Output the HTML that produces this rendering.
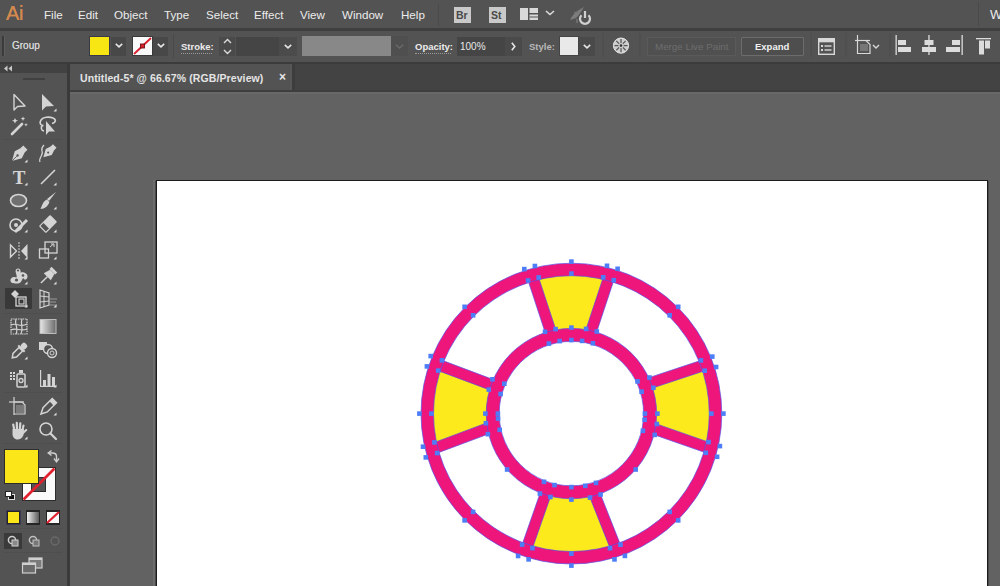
<!DOCTYPE html>
<html><head><meta charset="utf-8">
<style>
*{margin:0;padding:0;box-sizing:border-box}
html,body{width:1000px;height:586px;overflow:hidden;background:#535353;font-family:"Liberation Sans",sans-serif;color:#dcdcdc}
.a{position:absolute}
.menu span{position:absolute;top:8px;font-size:11.6px;color:#ececec;line-height:14px;white-space:nowrap}
.ctl{font-size:10px;line-height:12px;white-space:nowrap}
svg{position:absolute;overflow:visible}
</style></head><body>
<!-- MENU BAR -->
<div class="a" style="left:0;top:0;width:1000px;height:28px;background:#535353"></div>
<div class="a" style="left:0;top:28px;width:1000px;height:3px;background:#3f3f3f"></div>
<div class="menu">
<span style="left:6px;top:2px;font-size:20px;line-height:22px;color:#d48a4e;letter-spacing:-0.3px;text-shadow:0 0 0.5px #d48a4e">Ai</span>
<span style="left:44px">File</span>
<span style="left:78px">Edit</span>
<span style="left:114px">Object</span>
<span style="left:164px">Type</span>
<span style="left:206px">Select</span>
<span style="left:254px">Effect</span>
<span style="left:300px">View</span>
<span style="left:342px">Window</span>
<span style="left:401px">Help</span>
<span style="left:990px;font-size:13px">W</span>
</div>


<!-- MENU ICONS -->
<div class="a" style="left:438px;top:4px;width:1px;height:22px;background:#4a4a4a"></div>
<div class="a" style="left:454px;top:7px;width:17px;height:16px;background:#c9c9c9"></div>
<span class="a" style="left:456px;top:9px;font-size:10.5px;line-height:12px;color:#4a4a4a;font-weight:bold">Br</span>
<div class="a" style="left:489px;top:7px;width:17px;height:16px;background:#c9c9c9"></div>
<span class="a" style="left:491px;top:9px;font-size:10.5px;line-height:12px;color:#4a4a4a;font-weight:bold">St</span>
<svg style="left:520px;top:8px" width="18" height="12"><g fill="#d9d9d9"><rect x="0" y="0" width="8" height="12"/><rect x="9.5" y="0" width="8.5" height="5"/><rect x="9.5" y="6.5" width="8.5" height="5.5"/></g><rect x="9.5" y="8.5" width="8.5" height="1" fill="#535353"/></svg>
<svg style="left:545px;top:10px" width="10" height="6"><polyline points="1,1 5,4.5 9,1" stroke="#dcdcdc" stroke-width="1.6" fill="none"/></svg>
<svg style="left:568px;top:4px" width="26" height="22"><path d="M2 16 C5 10 10 6 16 3 C13 8 11 11 8 14 Z" fill="#7d7d7d"/><path d="M6 9 L10 8 M9 15 L9 19" stroke="#777" stroke-width="1.5"/><path d="M13.5 11.3 A5 5 0 1 0 20.5 11.3" fill="none" stroke="#d0d0d0" stroke-width="2.2"/><line x1="17" y1="7" x2="17" y2="14" stroke="#d0d0d0" stroke-width="2.2"/></svg>
<div class="a" style="left:978px;top:2px;width:1px;height:24px;background:#4a4a4a"></div>

<!-- CONTROL BAR -->
<div class="a" style="left:0;top:31px;width:1000px;height:31px;background:#535353"></div>
<div class="a" style="left:0;top:62px;width:1000px;height:2px;background:#3c3c3c"></div>


<!-- CONTROL CONTENT -->
<div class="a" style="left:2px;top:36px;width:2px;height:20px;background:#3b3b3b"></div>
<div class="a" style="left:4px;top:36px;width:1px;height:20px;background:#5e5e5e"></div>
<span class="a ctl" style="left:12px;top:40px;color:#d4d4d4;text-shadow:0 0 0.4px #d4d4d4">Group</span>
<div class="a" style="left:89px;top:36px;width:21px;height:20px;background:#3a3a46"></div>
<div class="a" style="left:90px;top:37px;width:19px;height:18px;background:#f7e514"></div>
<div class="a" style="left:111px;top:37px;width:15px;height:19px;background:#484848"></div>
<svg style="left:115px;top:43px" width="8" height="5"><polyline points="0.8,0.8 4,3.8 7.2,0.8" stroke="#e6e6e6" stroke-width="1.6" fill="none"/></svg>
<div class="a" style="left:132px;top:36px;width:21px;height:20px;background:#3a3a3a"></div>
<div class="a" style="left:133px;top:37px;width:19px;height:18px;background:#fafafa"></div>
<svg style="left:133px;top:37px" width="19" height="18"><line x1="1" y1="17" x2="18" y2="1" stroke="#d9202f" stroke-width="1.8"/><rect x="7.5" y="7" width="4" height="4" fill="#d9202f" stroke="#6a1515" stroke-width="0.9"/></svg>
<div class="a" style="left:153px;top:37px;width:15px;height:19px;background:#484848"></div>
<svg style="left:157px;top:43px" width="8" height="5"><polyline points="0.8,0.8 4,3.8 7.2,0.8" stroke="#e6e6e6" stroke-width="1.6" fill="none"/></svg>
<div class="a" style="left:173px;top:34px;width:1px;height:24px;background:#4a4a4a"></div>

<span class="a ctl" style="left:181px;top:41px;color:#ececec;font-weight:bold;font-size:9.5px">Stroke:</span>
<div class="a" style="left:181px;top:53px;width:31px;height:0;border-top:1px dotted #9a9a9a"></div>
<div class="a" style="left:219px;top:37px;width:16px;height:19px;background:#4a4a4a"></div>
<svg style="left:223px;top:38px" width="9" height="17"><polyline points="1,5 4.5,1.5 8,5" stroke="#dadada" stroke-width="1.4" fill="none"/><polyline points="1,12 4.5,15.5 8,12" stroke="#dadada" stroke-width="1.4" fill="none"/></svg>
<div class="a" style="left:236px;top:37px;width:43px;height:19px;background:#454545"></div>
<div class="a" style="left:279px;top:37px;width:18px;height:19px;background:#4b4b4b"></div>
<svg style="left:284px;top:44px" width="8" height="5"><polyline points="0.8,0.8 4,3.8 7.2,0.8" stroke="#e6e6e6" stroke-width="1.6" fill="none"/></svg>
<div class="a" style="left:302px;top:36px;width:89px;height:20px;background:#888888"></div>
<div class="a" style="left:391px;top:36px;width:17px;height:20px;background:#4f4f4f"></div>
<svg style="left:395px;top:44px" width="9" height="5"><polyline points="0.8,0.8 4.5,4 8.2,0.8" stroke="#6a6a6a" stroke-width="1.4" fill="none"/></svg>

<span class="a ctl" style="left:415px;top:41px;color:#ececec;font-weight:bold;font-size:9.5px">Opacity:</span>
<div class="a" style="left:415px;top:53px;width:36px;height:0;border-top:1px dotted #9a9a9a"></div>
<div class="a" style="left:457px;top:37px;width:48px;height:19px;background:#454545"></div>
<span class="a ctl" style="left:460px;top:41px;color:#e8e8e8;font-size:10px">100%</span>
<div class="a" style="left:505px;top:37px;width:17px;height:19px;background:#4a4a4a"></div>
<svg style="left:511px;top:42px" width="5" height="9"><polyline points="0.8,0.8 3.8,4.5 0.8,8.2" stroke="#e6e6e6" stroke-width="1.6" fill="none"/></svg>
<span class="a ctl" style="left:529px;top:41px;color:#b8b8b8;font-weight:bold;font-size:9.5px">Style:</span>
<div class="a" style="left:559px;top:36px;width:20px;height:20px;background:#444"></div>
<div class="a" style="left:560px;top:37px;width:18px;height:18px;background:#e9e9e9"></div>
<div class="a" style="left:579px;top:37px;width:16px;height:19px;background:#4a4a4a"></div>
<svg style="left:583px;top:44px" width="8" height="5"><polyline points="0.8,0.8 4,3.8 7.2,0.8" stroke="#e6e6e6" stroke-width="1.6" fill="none"/></svg>
<div class="a" style="left:602px;top:33px;width:2px;height:24px;background:#4f4f4f"></div>
<svg style="left:612px;top:37px" width="18" height="18"><circle cx="9" cy="8.6" r="7.6" fill="#cfcfcf" stroke="#e4e4e4" stroke-width="1"/><g stroke="#5a5a5a" stroke-width="1.3"><line x1="9" y1="2" x2="9" y2="15.2"/><line x1="2.4" y1="8.6" x2="15.6" y2="8.6"/><line x1="4.3" y1="3.9" x2="13.7" y2="13.3"/><line x1="13.7" y1="3.9" x2="4.3" y2="13.3"/></g><circle cx="9" cy="8.6" r="2.6" fill="#cfcfcf"/><circle cx="9" cy="8.6" r="1.3" fill="#333"/></svg>
<div class="a" style="left:639px;top:33px;width:2px;height:24px;background:#4f4f4f"></div>
<div class="a" style="left:647px;top:37px;width:89px;height:19px;border:1px solid #5a5a5a;background:#505050"></div>
<span class="a ctl" style="left:655px;top:41px;color:#6e6e6e;font-size:9.8px">Merge Live Paint</span>
<div class="a" style="left:741px;top:37px;width:63px;height:19px;border:1px solid #6c6c6c;background:#4e4e4e;border-radius:1px"></div>
<span class="a ctl" style="left:755px;top:41px;color:#f0f0f0;font-weight:bold;font-size:9.5px">Expand</span>
<div class="a" style="left:810px;top:33px;width:2px;height:24px;background:#4f4f4f"></div>
<svg style="left:818px;top:38px" width="17" height="17"><rect x="0.7" y="0.7" width="15.6" height="15.6" fill="none" stroke="#d8d8d8" stroke-width="1.4"/><rect x="1" y="1" width="15" height="3.3" fill="#d8d8d8"/><g fill="#d8d8d8"><rect x="3" y="7" width="2" height="2"/><rect x="3" y="11" width="2" height="2"/><rect x="6.5" y="7.3" width="7" height="1.4"/><rect x="6.5" y="11.3" width="7" height="1.4"/></g></svg>
<div class="a" style="left:845px;top:33px;width:2px;height:24px;background:#4f4f4f"></div>
<svg style="left:854px;top:34px" width="28" height="21"><g stroke="#d8d8d8" stroke-width="1.2" fill="none"><line x1="3.5" y1="1" x2="3.5" y2="20"/><line x1="1" y1="6.5" x2="16" y2="6.5"/><path d="M3.5 6.5 H12 L16 10.5 V19.5 H3.5"/></g><rect x="6" y="10" width="8" height="7" fill="#777"/><polyline points="19,11 22,14 25,11" stroke="#d8d8d8" stroke-width="1.4" fill="none"/></svg>
<div class="a" style="left:889px;top:33px;width:2px;height:24px;background:#4f4f4f"></div>
<svg style="left:894px;top:34px" width="104" height="22"><g fill="#dcdcdc">
<rect x="1.5" y="1" width="1.3" height="20"/><rect x="4" y="6" width="8" height="5"/><rect x="4" y="13" width="13" height="5"/>
<rect x="34.3" y="1" width="1.3" height="20"/><rect x="30.5" y="6" width="9" height="5"/><rect x="28" y="13" width="14" height="5"/>
<rect x="67.5" y="1" width="1.3" height="20"/><rect x="58" y="6" width="8" height="5"/><rect x="52" y="13" width="14" height="5"/>
<rect x="82" y="4" width="15" height="1.3"/><rect x="85" y="6.5" width="5" height="14"/><rect x="91" y="6.5" width="5" height="8"/>
</g></svg>

<!-- TAB BAR / PANEL HEADER -->
<div class="a" style="left:0;top:73px;width:67px;height:513px;background:#535353"></div>
<div class="a" style="left:67px;top:64px;width:3px;height:522px;background:#3a3a3a"></div>
<div class="a" style="left:70px;top:64px;width:930px;height:26px;background:#434343"></div>
<div class="a" style="left:70px;top:64px;width:220px;height:26px;background:#535353"></div>
<div class="a" style="left:290px;top:64px;width:2px;height:26px;background:#575757"></div>
<div class="a" style="left:292px;top:64px;width:3px;height:26px;background:#3d3d3d"></div>
<div class="a" style="left:70px;top:90px;width:930px;height:2px;background:#3e3e3e"></div>
<div class="a" style="left:70px;top:92px;width:930px;height:2px;background:#686868"></div>
<span class="a" style="left:80px;top:72px;font-size:10.5px;line-height:13px;color:#e4e4e4;white-space:nowrap;font-weight:bold;letter-spacing:0.1px">Untitled-5* @ 66.67% (RGB/Preview)</span>
<span class="a" style="left:279px;top:71px;font-size:12px;line-height:13px;color:#e6e6e6;font-weight:bold">×</span>


<div class="a" style="left:0;top:64px;width:67px;height:9px;background:#424242"></div>
<svg style="left:3px;top:65px" width="10" height="7"><path d="M4.5 0.5 L1 3.5 L4.5 6.5 Z M9 0.5 L5.5 3.5 L9 6.5 Z" fill="#c8c8c8"/></svg>
<div class="a" style="left:23px;top:78px;width:22px;height:2px;background:#404040"></div>
<div class="a" style="left:4px;top:139px;width:58px;height:1px;background:#4e4e4e"></div>
<div class="a" style="left:4px;top:313px;width:58px;height:1px;background:#4e4e4e"></div>
<div class="a" style="left:4px;top:392px;width:58px;height:1px;background:#4e4e4e"></div>
<div class="a" style="left:4px;top:443px;width:58px;height:1px;background:#4e4e4e"></div>
<!-- fill/stroke -->
<div class="a" style="left:22px;top:467px;width:34px;height:34px;background:#fafafa;border:1px solid #2c2c2c"></div>
<div class="a" style="left:31px;top:477px;width:15px;height:15px;background:#535353;border:1px solid #2c2c2c"></div>
<svg style="left:22px;top:467px" width="34" height="34"><line x1="1.5" y1="32.5" x2="32.5" y2="1.5" stroke="#e0202e" stroke-width="2.6"/></svg>
<div class="a" style="left:4px;top:449px;width:35px;height:35px;background:#2d2d2d"></div>
<div class="a" style="left:5px;top:450px;width:33px;height:33px;background:#fbe719"></div>
<svg style="left:47px;top:450px" width="12" height="13"><path d="M9.5 11 V6.5 C9.5 4 8 3 5.5 3 H2" fill="none" stroke="#cfcfcf" stroke-width="1.4"/><path d="M4.5 0.5 L1.2 3 L4.5 5.5 M7 8.5 L9.5 11.8 L12 8.5" fill="none" stroke="#cfcfcf" stroke-width="1.4"/></svg>
<div class="a" style="left:8px;top:494px;width:7px;height:6px;background:#111;border:1px solid #ddd"></div>
<div class="a" style="left:5px;top:491px;width:7px;height:6px;background:#fff;border:1px solid #222"></div>
<!-- small swatches -->
<div class="a" style="left:6px;top:510px;width:15px;height:15px;background:#252525;border:1px solid #3a3a55"></div>
<div class="a" style="left:8px;top:512px;width:11px;height:11px;background:#fbe719"></div>
<div class="a" style="left:26px;top:510px;width:14px;height:15px;background:#252525"></div>
<div class="a" style="left:27px;top:512px;width:12px;height:11px;background:linear-gradient(90deg,#f2f2f2,#5a5a5a)"></div>
<div class="a" style="left:46px;top:510px;width:14px;height:15px;background:#252525"></div>
<div class="a" style="left:47px;top:512px;width:12px;height:11px;background:#fafafa"></div>
<svg style="left:47px;top:512px" width="12" height="11"><line x1="0" y1="11" x2="12" y2="0" stroke="#e0202e" stroke-width="2.2"/></svg>
<!-- draw modes -->
<div class="a" style="left:4px;top:533px;width:18px;height:16px;background:#3a3a3a"></div>
<svg style="left:7px;top:535px" width="12" height="12"><circle cx="5" cy="5" r="3.6" fill="none" stroke="#cfcfcf" stroke-width="1.5"/><rect x="5" y="5" width="6" height="6" fill="#888" stroke="#cfcfcf"/></svg>
<svg style="left:28px;top:535px" width="12" height="12"><circle cx="5" cy="5" r="3.6" fill="none" stroke="#c0c0c0" stroke-width="1.5"/><rect x="5" y="5" width="6" height="6" fill="#777" stroke="#c0c0c0"/></svg>
<svg style="left:49px;top:535px" width="12" height="12"><circle cx="6" cy="6" r="4" fill="none" stroke="#6a6a6a" stroke-width="1.4"/></svg>
<div class="a" style="left:4px;top:528px;width:58px;height:1px;background:#4e4e4e"></div>
<div class="a" style="left:4px;top:552px;width:58px;height:1px;background:#4e4e4e"></div>
<!-- screen mode -->
<svg style="left:21px;top:557px" width="24" height="18"><rect x="8" y="1" width="13" height="10" fill="#7a7a7a" stroke="#cfcfcf" stroke-width="1.2"/><rect x="1.5" y="6" width="13" height="10" fill="#6a6a6a" stroke="#cfcfcf" stroke-width="1.2"/><rect x="1.5" y="6" width="13" height="2" fill="#cfcfcf"/><rect x="8" y="1" width="13" height="2" fill="#cfcfcf"/></svg>
<svg style="left:8.0px;top:91.5px" width="22" height="22" viewBox="0 0 22 22"><path d="M6 2.5 L6 18 L9.5 14.5 L17 14 Z" fill="none" stroke="#d4d4d4" stroke-width="1.4" stroke-linejoin="round"/></svg>
<svg style="left:37.0px;top:91.5px" width="22" height="22" viewBox="0 0 22 22"><path d="M5 2 L5 18.5 L9 14.5 L17 14 Z" fill="#d4d4d4"/><path d="M19.5 16.5 L19.5 19.5 L16.5 19.5 Z" fill="#e0e0e0"/></svg>
<svg style="left:8.0px;top:115.0px" width="22" height="22" viewBox="0 0 22 22"><line x1="4" y1="19" x2="14" y2="9" stroke="#d4d4d4" stroke-width="2.6" stroke-linecap="round"/><path d="M7 3 l1 2 l2 .6 l-2 .8 l-1 2 l-1-2 l-2-.8 l2-.6z M15 1.5 l.7 1.6 l1.6.6 l-1.6.6 l-.7 1.6 l-.7-1.6 l-1.6-.6 l1.6-.6z M18 8 l.6 1.3 l1.3.5 l-1.3.5 l-.6 1.3 l-.6-1.3 l-1.3-.5 l1.3-.5z" fill="#d4d4d4"/></svg>
<svg style="left:37.0px;top:115.0px" width="22" height="22" viewBox="0 0 22 22"><path d="M15 8.5 C19 7.5 19.5 4.5 16 3 C12 1.5 6 2 4 5 C2 8 3.5 10.5 6.5 10.5 M5.5 10.5 C3.5 12 4 15.5 7 16" fill="none" stroke="#d4d4d4" stroke-width="1.6"/><path d="M9 6 L9 20 L12 16.5 L18 16.5 Z" fill="#d4d4d4"/></svg>
<svg style="left:8.0px;top:143.0px" width="22" height="22" viewBox="0 0 22 22"><g transform="rotate(45 11 11)"><path d="M8 2 H14 V6 L16 12 L11 21 L6 12 L8 6 Z" fill="#d4d4d4"/><circle cx="11" cy="13" r="1.2" fill="#535353"/><line x1="11" y1="14" x2="11" y2="21" stroke="#535353" stroke-width="0.8"/></g><path d="M19.5 16.5 L19.5 19.5 L16.5 19.5 Z" fill="#e0e0e0"/></svg>
<svg style="left:37.0px;top:143.0px" width="22" height="22" viewBox="0 0 22 22"><g transform="translate(3,-1) scale(0.85)"><g transform="rotate(45 11 11)"><path d="M8 2 H14 V6 L16 12 L11 21 L6 12 L8 6 Z" fill="#d4d4d4"/><circle cx="11" cy="13" r="1.2" fill="#535353"/></g></g><path d="M3 19 C1 15 7 12 5 8 C4 5 6 3 7 2" fill="none" stroke="#d4d4d4" stroke-width="1.2"/></svg>
<svg style="left:8.0px;top:166.0px" width="22" height="22" viewBox="0 0 22 22"><text x="11" y="18" text-anchor="middle" font-family="Liberation Serif" font-weight="bold" font-size="19" fill="#d4d4d4">T</text><path d="M19.5 16.5 L19.5 19.5 L16.5 19.5 Z" fill="#e0e0e0"/></svg>
<svg style="left:37.0px;top:166.0px" width="22" height="22" viewBox="0 0 22 22"><line x1="4" y1="18" x2="18" y2="4" stroke="#d4d4d4" stroke-width="1.6"/><path d="M19.5 16.5 L19.5 19.5 L16.5 19.5 Z" fill="#e0e0e0"/></svg>
<svg style="left:8.0px;top:189.5px" width="22" height="22" viewBox="0 0 22 22"><ellipse cx="10.5" cy="10.5" rx="8" ry="6" fill="#6f6f6f" stroke="#d4d4d4" stroke-width="1.6"/><path d="M19.5 16.5 L19.5 19.5 L16.5 19.5 Z" fill="#e0e0e0"/></svg>
<svg style="left:37.0px;top:189.5px" width="22" height="22" viewBox="0 0 22 22"><path d="M19 2 L12 11 L10 9 Z" fill="#d4d4d4"/><path d="M10 9.5 L12.5 12 C11 16 8 19 3.5 19 C5 16 6 11 10 9.5 Z" fill="#d4d4d4"/><path d="M19.5 16.5 L19.5 19.5 L16.5 19.5 Z" fill="#e0e0e0"/></svg>
<svg style="left:8.0px;top:213.0px" width="22" height="22" viewBox="0 0 22 22"><circle cx="8" cy="12" r="6" fill="none" stroke="#d4d4d4" stroke-width="1.6"/><circle cx="8" cy="12" r="2" fill="#d4d4d4"/><line x1="7" y1="19" x2="19" y2="7" stroke="#d4d4d4" stroke-width="3"/><path d="M19.5 16.5 L19.5 19.5 L16.5 19.5 Z" fill="#e0e0e0"/></svg>
<svg style="left:37.0px;top:213.0px" width="22" height="22" viewBox="0 0 22 22"><g transform="rotate(45 11 11)"><rect x="6" y="3" width="10" height="16" rx="1" fill="#d4d4d4"/><rect x="7.2" y="13.5" width="7.6" height="4.3" fill="#535353"/></g><path d="M19.5 16.5 L19.5 19.5 L16.5 19.5 Z" fill="#e0e0e0"/></svg>
<svg style="left:8.0px;top:240.0px" width="22" height="22" viewBox="0 0 22 22"><path d="M2.5 5 L8.5 11 L2.5 17 Z" fill="none" stroke="#d4d4d4" stroke-width="1.4"/><line x1="11" y1="2" x2="11" y2="20" stroke="#d4d4d4" stroke-width="1" stroke-dasharray="2 1"/><path d="M19.5 4 L13 11 L19.5 18 Z" fill="#d4d4d4"/><path d="M19.5 16.5 L19.5 19.5 L16.5 19.5 Z" fill="#e0e0e0"/></svg>
<svg style="left:37.0px;top:240.0px" width="22" height="22" viewBox="0 0 22 22"><rect x="8" y="2" width="12" height="11" fill="none" stroke="#d4d4d4" stroke-width="1.3"/><rect x="2.5" y="9" width="9" height="9" fill="none" stroke="#d4d4d4" stroke-width="1.3"/><path d="M13 7 L16.5 4 M14 4 H17 V7" stroke="#d4d4d4" stroke-width="1" fill="none"/><path d="M19.5 16.5 L19.5 19.5 L16.5 19.5 Z" fill="#e0e0e0"/></svg>
<svg style="left:8.0px;top:264.5px" width="22" height="22" viewBox="0 0 22 22"><path d="M2.5 16 C2 12.5 6 11 8.5 12.5 C9.5 10 6.5 7 8 4.5 C10 2 13.5 4 12.5 7.5 C15 6.5 20 8 19.5 12 C19 15 16 15.5 15.5 13 C13.5 14 14 18.5 9.5 18.5 C6.5 18.5 3 18.5 2.5 16 Z" fill="#d4d4d4"/><circle cx="8.5" cy="15" r="1.6" fill="#535353"/><circle cx="15" cy="10.5" r="1.3" fill="#535353"/><circle cx="10" cy="5.5" r="1.1" fill="#535353"/><path d="M19.5 16.5 L19.5 19.5 L16.5 19.5 Z" fill="#e0e0e0"/></svg>
<svg style="left:37.0px;top:264.5px" width="22" height="22" viewBox="0 0 22 22"><g transform="rotate(45 11 11)"><rect x="7" y="2" width="8" height="3" fill="#d4d4d4"/><path d="M8 5 H14 L16 12 H6 Z" fill="#d4d4d4"/><line x1="11" y1="12" x2="11" y2="21" stroke="#d4d4d4" stroke-width="1.5"/></g><path d="M19.5 16.5 L19.5 19.5 L16.5 19.5 Z" fill="#e0e0e0"/></svg>
<div class="a" style="left:5px;top:288px;width:27px;height:21px;background:#393939;border-radius:1px"></div>
<svg style="left:8.0px;top:287.5px" width="22" height="22" viewBox="0 0 22 22"><rect x="8" y="9" width="10" height="9" fill="none" stroke="#d4d4d4" stroke-width="1.3"/><rect x="11" y="11" width="5" height="5" fill="none" stroke="#d4d4d4" stroke-width="1.1"/><path d="M3 6 L7 2 L11 6 L7 10 Z" fill="#d4d4d4"/><path d="M19.5 16.5 L19.5 19.5 L16.5 19.5 Z" fill="#e0e0e0"/></svg>
<svg style="left:37.0px;top:287.5px" width="22" height="22" viewBox="0 0 22 22"><path d="M3 2 L12 5 V17 L3 20 Z" fill="none" stroke="#d4d4d4" stroke-width="1.2"/><line x1="3" y1="8" x2="12" y2="9" stroke="#d4d4d4"/><line x1="3" y1="14" x2="12" y2="13" stroke="#d4d4d4"/><line x1="7" y1="3" x2="7" y2="19" stroke="#d4d4d4"/><path d="M12 11 L20 11 M12 14 L19 14 M12 17 L20 17" stroke="#9a9a9a"/><path d="M19.5 16.5 L19.5 19.5 L16.5 19.5 Z" fill="#e0e0e0"/></svg>
<svg style="left:8.0px;top:316.0px" width="22" height="22" viewBox="0 0 22 22"><rect x="3" y="3" width="16" height="15" fill="none" stroke="#d4d4d4" stroke-width="1.2" stroke-dasharray="1.5 .8"/><path d="M3 9 C8 6 12 12 19 8 M3 14 C8 11 12 16 19 13 M8 3 C6 8 11 12 8 18 M14 3 C12 8 16 12 13 18" fill="none" stroke="#d4d4d4" stroke-width="1.2"/></svg>
<svg style="left:37.0px;top:316.0px" width="22" height="22" viewBox="0 0 22 22"><defs><linearGradient id="gg" x1="0" x2="1"><stop offset="0" stop-color="#e8e8e8"/><stop offset="1" stop-color="#6a6a6a"/></linearGradient></defs><rect x="3" y="3.5" width="16" height="14" fill="url(#gg)" stroke="#bdbdbd" stroke-width="1"/></svg>
<svg style="left:8.0px;top:340.0px" width="22" height="22" viewBox="0 0 22 22"><g transform="rotate(45 11 11)"><rect x="8" y="1" width="6" height="6" rx="2" fill="#d4d4d4"/><rect x="6.5" y="6.5" width="9" height="2" fill="#d4d4d4"/><path d="M8.5 8.5 H13.5 V17 L11 20.5 L8.5 17 Z" fill="none" stroke="#d4d4d4" stroke-width="1.5"/></g><path d="M19.5 16.5 L19.5 19.5 L16.5 19.5 Z" fill="#e0e0e0"/></svg>
<svg style="left:37.0px;top:340.0px" width="22" height="22" viewBox="0 0 22 22"><rect x="2" y="2" width="8" height="8" fill="#d4d4d4"/><circle cx="11" cy="9" r="4.5" fill="#535353" stroke="#d4d4d4" stroke-width="1.4"/><circle cx="15" cy="13" r="4.5" fill="#535353" stroke="#d4d4d4" stroke-width="1.4"/><circle cx="15" cy="13" r="2" fill="#535353" stroke="#d4d4d4"/></svg>
<svg style="left:8.0px;top:368.0px" width="22" height="22" viewBox="0 0 22 22"><g fill="#d4d4d4"><rect x="2" y="4" width="2" height="2"/><rect x="5" y="4" width="2" height="2"/><rect x="2" y="7" width="2" height="2"/><rect x="5" y="7" width="2" height="2"/><rect x="2" y="10" width="2" height="2"/><rect x="5" y="10" width="2" height="2"/><rect x="11" y="2" width="4" height="3"/></g><rect x="9" y="6" width="8" height="13" rx="1" fill="none" stroke="#d4d4d4" stroke-width="1.5"/><circle cx="13" cy="12.5" r="2" fill="none" stroke="#d4d4d4" stroke-width="1.3"/><path d="M19.5 16.5 L19.5 19.5 L16.5 19.5 Z" fill="#e0e0e0"/></svg>
<svg style="left:37.0px;top:368.0px" width="22" height="22" viewBox="0 0 22 22"><g fill="#d4d4d4"><rect x="3" y="2" width="1.2" height="17"/><rect x="3" y="17.8" width="16" height="1.2"/><rect x="6" y="12" width="3" height="6"/><rect x="10.5" y="6" width="3" height="12"/><rect x="15" y="9" width="3" height="9"/></g><path d="M19.5 16.5 L19.5 19.5 L16.5 19.5 Z" fill="#e0e0e0"/></svg>
<svg style="left:8.0px;top:396.0px" width="22" height="22" viewBox="0 0 22 22"><g stroke="#d4d4d4" stroke-width="1.2" fill="none"><line x1="6" y1="1" x2="6" y2="19"/><line x1="1" y1="6" x2="16" y2="6"/><path d="M6 6 H14 L17 9 V18 H6"/></g><rect x="8" y="9" width="8" height="8" fill="#7a7a7a"/></svg>
<svg style="left:37.0px;top:396.0px" width="22" height="22" viewBox="0 0 22 22"><g transform="rotate(45 11 11)"><path d="M8 2 H14 V15 L11 21 L8 15 Z" fill="none" stroke="#d4d4d4" stroke-width="1.5"/><rect x="8" y="2" width="6" height="4" fill="#d4d4d4"/></g><path d="M19.5 16.5 L19.5 19.5 L16.5 19.5 Z" fill="#e0e0e0"/></svg>
<svg style="left:8.0px;top:419.5px" width="22" height="22" viewBox="0 0 22 22"><g stroke="#d4d4d4" stroke-linecap="round" fill="none"><line x1="6.3" y1="10" x2="5.2" y2="4.5" stroke-width="2.2"/><line x1="9" y1="9.5" x2="8.8" y2="2.8" stroke-width="2.2"/><line x1="11.8" y1="9.5" x2="12.3" y2="3.3" stroke-width="2.2"/><line x1="14.3" y1="10.5" x2="15.5" y2="5.5" stroke-width="2.1"/><line x1="15" y1="13" x2="18.2" y2="10" stroke-width="2.1"/></g><path d="M4.5 9 H16 L15.5 15 C14 18.5 12 19.5 9.5 19.5 C6.5 19.5 4.5 17 4.5 14 Z" fill="#d4d4d4"/><path d="M19.5 16.5 L19.5 19.5 L16.5 19.5 Z" fill="#e0e0e0"/></svg>
<svg style="left:37.0px;top:419.5px" width="22" height="22" viewBox="0 0 22 22"><circle cx="9" cy="9" r="6" fill="none" stroke="#d4d4d4" stroke-width="1.6"/><line x1="13.5" y1="13.5" x2="19" y2="19" stroke="#d4d4d4" stroke-width="2.2" stroke-linecap="round"/></svg>
<!-- CANVAS -->
<div class="a" style="left:70px;top:94px;width:930px;height:492px;background:#626262"></div>
<div class="a" style="left:153px;top:180px;width:2px;height:406px;background:#6c6c6c"></div><div class="a" style="left:155px;top:181px;width:1px;height:405px;background:#484848"></div><div class="a" style="left:988px;top:181px;width:1px;height:405px;background:#4a4a4a"></div><div class="a" style="left:156px;top:180px;width:832px;height:406px;background:#1c1c1c"></div>
<div class="a" style="left:157px;top:181px;width:830px;height:405px;background:#ffffff"></div>

<svg class="a" style="left:0;top:0" width="1000" height="586" viewBox="0 0 1000 586">
<path d="M552.5,337.2 L532.0,274.9 A144.15,144.15 0 0 1 609.9,274.7 L589.2,336.9 A78.7,78.7 0 0 0 552.5,337.2 Z M644.7,384.9 L706.8,364.2 A144.15,144.15 0 0 1 711.2,448.9 L648.9,427.1 A78.7,78.7 0 0 0 644.7,384.9 Z M592.6,489.4 L616.8,550.4 A144.15,144.15 0 0 1 525.9,550.4 L547.5,488.6 A78.7,78.7 0 0 0 592.6,489.4 Z M493.7,426.1 L431.7,449.3 A144.15,144.15 0 0 1 436.1,364.0 L497.3,387.0 A78.7,78.7 0 0 0 493.7,426.1 Z" fill="#fcea1c"/>
<path d="M532.0,274.9 L552.5,337.2 M609.9,274.7 L589.2,336.9 M706.8,364.2 L644.7,384.9 M711.2,448.9 L648.9,427.1 M616.8,550.4 L592.6,489.4 M525.9,550.4 L547.5,488.6 M431.7,449.3 L493.7,426.1 M436.1,364.0 L497.3,387.0" stroke="#ee157b" stroke-width="11" fill="none"/>
<circle cx="571.4" cy="413.6" r="144.15" stroke="#ee157b" stroke-width="12.5" fill="none"/>
<circle cx="571.4" cy="413.6" r="78.7" stroke="#ee157b" stroke-width="13" fill="none"/>
<g stroke="#5a50e6" stroke-opacity="0.7" stroke-width="1" fill="none"><circle cx="571.4" cy="413.6" r="150.4"/><circle cx="571.4" cy="413.6" r="137.9"/><circle cx="571.4" cy="413.6" r="85.2"/><circle cx="571.4" cy="413.6" r="72.2"/><path d="M539.3,279.5 L555.9,329.8 M528.7,282.5 L545.2,332.5 M613.2,282.2 L596.6,332.2 M602.6,279.3 L585.9,329.6 M702.7,371.4 L652.7,388.0 M698.9,361.1 L648.7,377.7 M703.8,452.1 L654.0,434.7 M706.5,441.4 L656.0,423.7 M609.3,546.2 L589.7,496.8 M619.7,542.8 L600.3,493.8 M522.8,542.7 L540.2,492.9 M533.2,546.1 L550.7,496.2 M436.4,441.7 L486.7,422.9 M439.1,452.4 L488.7,433.9 M443.9,361.0 L493.3,379.6 M440.1,371.4 L489.6,389.9"/></g>
<g fill="#4d7ef7"><rect x="532.6" y="263.7" width="4.6" height="4.6"/><rect x="536.4" y="275.2" width="4.6" height="4.6"/><rect x="553.3" y="326.8" width="4.6" height="4.6"/><rect x="557.3" y="338.8" width="4.6" height="4.6"/><rect x="522.0" y="266.8" width="4.6" height="4.6"/><rect x="525.8" y="278.2" width="4.6" height="4.6"/><rect x="542.7" y="329.5" width="4.6" height="4.6"/><rect x="546.6" y="341.3" width="4.6" height="4.6"/><rect x="615.3" y="266.5" width="4.6" height="4.6"/><rect x="611.5" y="277.9" width="4.6" height="4.6"/><rect x="594.5" y="329.2" width="4.6" height="4.6"/><rect x="590.6" y="341.0" width="4.6" height="4.6"/><rect x="604.7" y="263.5" width="4.6" height="4.6"/><rect x="600.9" y="275.0" width="4.6" height="4.6"/><rect x="583.8" y="326.6" width="4.6" height="4.6"/><rect x="579.8" y="338.6" width="4.6" height="4.6"/><rect x="713.8" y="364.7" width="4.6" height="4.6"/><rect x="702.4" y="368.4" width="4.6" height="4.6"/><rect x="651.1" y="385.5" width="4.6" height="4.6"/><rect x="639.3" y="389.4" width="4.6" height="4.6"/><rect x="710.0" y="354.3" width="4.6" height="4.6"/><rect x="698.6" y="358.1" width="4.6" height="4.6"/><rect x="647.1" y="375.2" width="4.6" height="4.6"/><rect x="635.2" y="379.1" width="4.6" height="4.6"/><rect x="714.8" y="454.5" width="4.6" height="4.6"/><rect x="703.5" y="450.5" width="4.6" height="4.6"/><rect x="652.4" y="432.6" width="4.6" height="4.6"/><rect x="640.6" y="428.5" width="4.6" height="4.6"/><rect x="717.6" y="443.8" width="4.6" height="4.6"/><rect x="706.2" y="439.8" width="4.6" height="4.6"/><rect x="654.5" y="421.7" width="4.6" height="4.6"/><rect x="642.3" y="417.4" width="4.6" height="4.6"/><rect x="612.2" y="557.1" width="4.6" height="4.6"/><rect x="607.7" y="545.9" width="4.6" height="4.6"/><rect x="587.7" y="495.3" width="4.6" height="4.6"/><rect x="583.0" y="483.5" width="4.6" height="4.6"/><rect x="622.6" y="553.6" width="4.6" height="4.6"/><rect x="618.2" y="542.4" width="4.6" height="4.6"/><rect x="598.3" y="492.2" width="4.6" height="4.6"/><rect x="593.7" y="480.6" width="4.6" height="4.6"/><rect x="515.8" y="553.7" width="4.6" height="4.6"/><rect x="519.8" y="542.3" width="4.6" height="4.6"/><rect x="537.6" y="491.3" width="4.6" height="4.6"/><rect x="541.7" y="479.5" width="4.6" height="4.6"/><rect x="526.3" y="557.1" width="4.6" height="4.6"/><rect x="530.2" y="545.8" width="4.6" height="4.6"/><rect x="548.1" y="494.7" width="4.6" height="4.6"/><rect x="552.2" y="482.8" width="4.6" height="4.6"/><rect x="420.7" y="444.4" width="4.6" height="4.6"/><rect x="432.1" y="440.1" width="4.6" height="4.6"/><rect x="483.6" y="420.9" width="4.6" height="4.6"/><rect x="495.8" y="416.3" width="4.6" height="4.6"/><rect x="423.5" y="455.1" width="4.6" height="4.6"/><rect x="434.8" y="450.8" width="4.6" height="4.6"/><rect x="485.6" y="431.9" width="4.6" height="4.6"/><rect x="497.4" y="427.5" width="4.6" height="4.6"/><rect x="428.4" y="353.8" width="4.6" height="4.6"/><rect x="439.6" y="358.0" width="4.6" height="4.6"/><rect x="490.2" y="377.0" width="4.6" height="4.6"/><rect x="502.0" y="381.4" width="4.6" height="4.6"/><rect x="424.6" y="364.1" width="4.6" height="4.6"/><rect x="435.9" y="368.3" width="4.6" height="4.6"/><rect x="486.5" y="387.3" width="4.6" height="4.6"/><rect x="498.3" y="391.7" width="4.6" height="4.6"/><rect x="721.1" y="411.3" width="4.6" height="4.6"/><rect x="709.1" y="411.3" width="4.6" height="4.6"/><rect x="655.1" y="411.3" width="4.6" height="4.6"/><rect x="642.6" y="411.3" width="4.6" height="4.6"/><rect x="569.1" y="563.3" width="4.6" height="4.6"/><rect x="569.1" y="551.3" width="4.6" height="4.6"/><rect x="569.1" y="497.3" width="4.6" height="4.6"/><rect x="569.1" y="484.8" width="4.6" height="4.6"/><rect x="417.1" y="411.3" width="4.6" height="4.6"/><rect x="429.1" y="411.3" width="4.6" height="4.6"/><rect x="483.1" y="411.3" width="4.6" height="4.6"/><rect x="495.6" y="411.3" width="4.6" height="4.6"/><rect x="569.1" y="259.3" width="4.6" height="4.6"/><rect x="569.1" y="271.3" width="4.6" height="4.6"/><rect x="569.1" y="325.3" width="4.6" height="4.6"/><rect x="569.1" y="337.8" width="4.6" height="4.6"/><rect x="675.9" y="518.1" width="4.6" height="4.6"/><rect x="667.4" y="509.6" width="4.6" height="4.6"/><rect x="462.3" y="518.1" width="4.6" height="4.6"/><rect x="470.8" y="509.6" width="4.6" height="4.6"/><rect x="462.3" y="304.5" width="4.6" height="4.6"/><rect x="470.8" y="313.0" width="4.6" height="4.6"/><rect x="675.9" y="304.5" width="4.6" height="4.6"/><rect x="667.4" y="313.0" width="4.6" height="4.6"/><rect x="633.4" y="467.2" width="4.6" height="4.6"/><rect x="504.8" y="467.2" width="4.6" height="4.6"/></g>
</svg>
</body></html>
